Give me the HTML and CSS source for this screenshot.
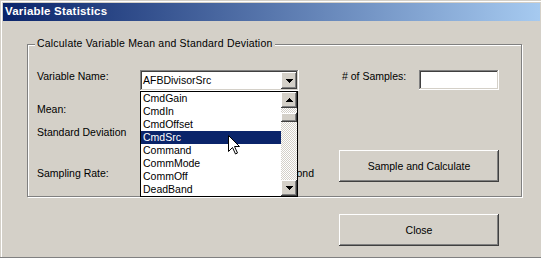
FILE: index.html
```html
<!DOCTYPE html>
<html>
<head>
<meta charset="utf-8">
<title>Variable Statistics</title>
<link rel="stylesheet" href="styles.css">
</head>
<body>
<div class="window">
  <div class="titlebar">Variable Statistics</div>
  <div class="body">
    <div class="group">
      <span class="legend">Calculate Variable Mean and Standard Deviation</span>
      <span class="label lbl-name">Variable Name:</span>
      <div class="combo">
        <span class="combo-text">AFBDivisorSrc</span>
        <span class="btn3d combo-btn"><svg class="arrow" width="7" height="4" viewBox="0 0 7 4"><path d="M0 0h7v1H0zM1 1h5v1H1zM2 2h3v1H2zM3 3h1v1H3z"/></svg></span>
        <div class="dropdown">
          <ul class="items">
            <li>CmdGain</li>
            <li>CmdIn</li>
            <li>CmdOffset</li>
            <li class="sel">CmdSrc</li>
            <li>Command</li>
            <li>CommMode</li>
            <li>CommOff</li>
            <li>DeadBand</li>
          </ul>
          <div class="scrollbar">
            <span class="btn3d sb-btn"><svg class="arrow" width="7" height="4" viewBox="0 0 7 4"><path d="M3 0h1v1H3zM2 1h3v1H2zM1 2h5v1H1zM0 3h7v1H0z"/></svg></span>
            <span class="track track-a"></span>
            <span class="btn3d thumb"></span>
            <span class="track track-b"></span>
            <span class="btn3d sb-btn"><svg class="arrow" width="7" height="4" viewBox="0 0 7 4"><path d="M0 0h7v1H0zM1 1h5v1H1zM2 2h3v1H2zM3 3h1v1H3z"/></svg></span>
          </div>
        </div>
      </div>
      <span class="label lbl-samples"># of Samples:</span>
      <div class="textbox"></div>
      <span class="label lbl-mean">Mean:</span>
      <span class="label lbl-sd">Standard Deviation</span>
      <span class="label lbl-rate">Sampling Rate:</span>
      <span class="label lbl-units">Samples per Second</span>
      <button class="btn3d push btn-sample">Sample and Calculate</button>
    </div>
    <div class="footer">
      <button class="btn3d push">Close</button>
    </div>
  </div>
  <svg class="cursor" width="13" height="21" viewBox="0 0 13 21"><path d="M0.5 0.5V16.5L4.5 12.5L7.5 19L9.5 18L6.5 11.5H11.5Z" fill="#fff" stroke="#000" stroke-width="1" stroke-linejoin="miter"/></svg>
</div>
</body>
</html>
```
FILE: styles.css
```css
html, body {
  margin: 0;
  padding: 0;
  width: 541px;
  height: 258px;
  overflow: hidden;
  background: #d4d0c8;
}

.window {
  position: relative;
  box-sizing: border-box;
  width: 541px;
  height: 258px;
  padding: 3px 1px 0 3px;
  background: #d4d0c8;
  border-bottom: 1px solid #808080;
  box-shadow: inset 1px 1px #d4d0c8, inset 2px 2px #fff;
  font-family: "Liberation Sans", Arial, sans-serif;
  font-size: 10.5px;
  color: #000;
}

.titlebar {
  height: 18px;
  box-sizing: border-box;
  padding-left: 2px;
  background: linear-gradient(to right, #0a246a, #a6caf0);
  color: #fff;
  font-weight: bold;
  font-size: 11.5px;
  letter-spacing: 0.2px;
  line-height: 16px;
  white-space: nowrap;
}

.body {
  padding: 23px 0 0 24px;
}

.group {
  position: relative;
  box-sizing: border-box;
  width: 495px;
  height: 153px;
  border: 1px solid #808080;
  box-shadow: inset 1px 1px #fff, 1px 1px #fff;
  padding: 25px 22px 14px 9px;
  display: grid;
  grid-template-columns: 103px 159px 40px 80px 80px;
  grid-template-rows: 33px 23px 24px 32px;
}

.legend {
  position: absolute;
  top: -8px;
  left: 7px;
  padding: 0 3px 0 2px;
  background: #d4d0c8;
  line-height: 13px;
  letter-spacing: 0.2px;
  white-space: nowrap;
}

.label {
  line-height: 13px;
  align-self: start;
  white-space: nowrap;
}

.lbl-name { grid-area: 1 / 1; }
.lbl-samples { grid-area: 1 / 4; padding-left: 3px; }
.lbl-mean { grid-area: 2 / 1; }
.lbl-sd { grid-area: 3 / 1; }
.lbl-rate { grid-area: 4 / 1; margin-top: 17px; }
.lbl-units {
  grid-area: 4 / 2 / 5 / 4;
  margin-top: 17px;
  text-align: right;
  padding-right: 25px;
}

.combo {
  grid-area: 1 / 2;
  position: relative;
  box-sizing: border-box;
  width: 159px;
  height: 21px;
  padding: 2px;
  display: flex;
  background: #fff;
  box-shadow: inset -1px -1px #fff, inset 1px 1px #808080, inset -2px -2px #d4d0c8, inset 2px 2px #404040;
  align-self: start;
}

.combo-text {
  flex: 1;
  padding-left: 1px;
  line-height: 17px;
  white-space: nowrap;
}

.btn3d {
  background: #d4d0c8;
  border: 0;
  box-shadow: inset -1px -1px #404040, inset 1px 1px #fff, inset -2px -2px #808080, inset 2px 2px #d4d0c8;
}

.combo-btn {
  flex: none;
  width: 16px;
  height: 17px;
  display: flex;
  align-items: center;
  justify-content: center;
}

.arrow {
  display: block;
  fill: #000;
}

.dropdown {
  position: absolute;
  top: 21px;
  left: 0;
  z-index: 2;
  box-sizing: border-box;
  width: 158px;
  height: 106px;
  border: 1px solid #000;
  background: #fff;
  display: flex;
}

.items {
  list-style: none;
  margin: 0;
  padding: 0;
  flex: 1;
}

.items li {
  height: 13px;
  line-height: 13px;
  padding-left: 2px;
  white-space: nowrap;
}

.items li.sel {
  background: #0a246a;
  color: #fff;
}

.scrollbar {
  flex: none;
  width: 16px;
  display: flex;
  flex-direction: column;
}

.sb-btn {
  flex: none;
  height: 16px;
  display: flex;
  align-items: center;
  justify-content: center;
}

.track {
  background: repeating-conic-gradient(#d4d0c8 0 25%, #fff 0 50%) 0 0 / 2px 2px;
}

.track-a { flex: none; height: 5px; }
.thumb { flex: none; height: 9px; }
.track-b { flex: 1; }

.textbox {
  grid-area: 1 / 5;
  width: 80px;
  height: 20px;
  background: #fff;
  box-shadow: inset -1px -1px #fff, inset 1px 1px #808080, inset -2px -2px #d4d0c8, inset 2px 2px #404040;
  align-self: start;
}

.push {
  width: 160px;
  height: 32px;
  padding: 0;
  font: inherit;
  color: #000;
  text-align: center;
}

.btn-sample {
  grid-area: 4 / 4 / 5 / 6;
}

.footer {
  box-sizing: border-box;
  width: 495px;
  margin-top: 17px;
  padding-right: 23px;
  display: flex;
  justify-content: flex-end;
}

.cursor {
  position: absolute;
  left: 228px;
  top: 135px;
  z-index: 5;
}
```
